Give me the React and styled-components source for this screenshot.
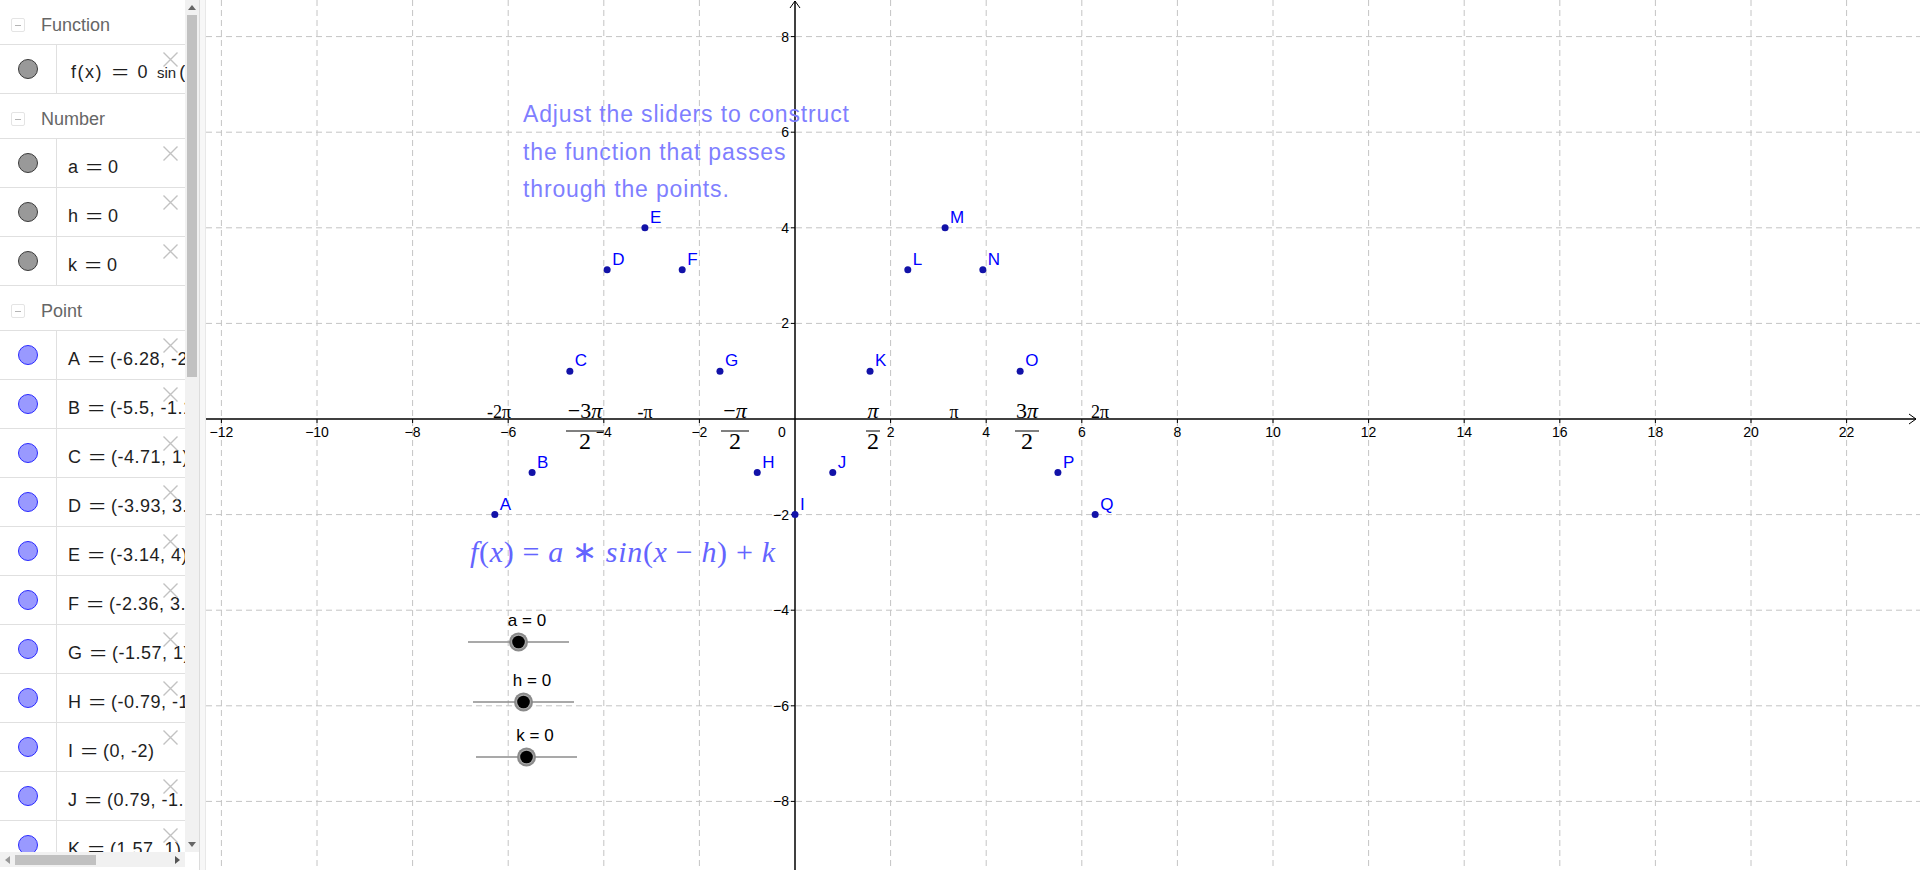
import React from 'react';
import styled, { createGlobalStyle } from 'styled-components';

const GlobalStyle = createGlobalStyle`
  html, body { margin: 0; padding: 0; background: #fff; overflow: hidden; }
  body { font-family: "Liberation Sans", Arial, sans-serif; }
  #root { width: 1920px; height: 870px; }
`;

const Page = styled.div`
  display: flex;
  width: 1920px;
  height: 870px;
  overflow: hidden;
  background: #fff;
`;

const AlgebraPanel = styled.div`
  width: 199px;
  height: 870px;
  flex-shrink: 0;
  display: flex;
  flex-direction: column;
`;

const PanelBody = styled.div`
  display: flex;
  height: 852px;
`;

const List = styled.div`
  width: 185px;
  height: 852px;
  overflow: hidden;
  flex-shrink: 0;
`;

const VScroll = styled.div`
  width: 14px;
  height: 852px;
  background: #f1f1f1;
  display: flex;
  flex-direction: column;
  align-items: center;
`;

const HScroll = styled.div`
  width: 185px;
  height: 15px;
  background: #f1f1f1;
  display: flex;
  align-items: center;
`;

const ArrowBtn = styled.div`
  width: ${p => (p.$horizontal ? '15px' : '14px')};
  height: 15px;
  flex-shrink: 0;
  display: flex;
  align-items: center;
  justify-content: center;
  &::before {
    content: '';
    width: 0;
    height: 0;
    ${p => p.$dir === 'up' && 'border-left: 4px solid transparent; border-right: 4px solid transparent; border-bottom: 5px solid #666;'}
    ${p => p.$dir === 'down' && 'border-left: 4px solid transparent; border-right: 4px solid transparent; border-top: 5px solid #666;'}
    ${p => p.$dir === 'left' && 'border-top: 4px solid transparent; border-bottom: 4px solid transparent; border-right: 5px solid #999;'}
    ${p => p.$dir === 'right' && 'border-top: 4px solid transparent; border-bottom: 4px solid transparent; border-left: 5px solid #555;'}
  }
`;

const VThumb = styled.div`
  width: 10px;
  height: 362px;
  background: #c1c1c1;
  flex-shrink: 0;
`;

const HThumb = styled.div`
  width: 81px;
  height: 10px;
  background: #c1c1c1;
  flex-shrink: 0;
`;

const Spacer = styled.div`
  flex: 1;
`;

const Divider = styled.div`
  width: 7px;
  height: 870px;
  flex-shrink: 0;
  box-sizing: border-box;
  background: #f7f7f7;
  border-left: 1px solid #dcdcdc;
  border-right: 1px solid #e8e8e8;
`;

const Graphics = styled.div`
  flex: 1;
  height: 870px;
  position: relative;
  overflow: hidden;
`;

const GroupHeader = styled.div`
  height: 45px;
  box-sizing: border-box;
  border-bottom: 1px solid #e0e0e0;
  padding: 6px 0 0 11px;
  display: flex;
  align-items: center;
  gap: 16px;
`;

const Collapse = styled.span`
  width: 14px;
  height: 14px;
  box-sizing: border-box;
  border: 1px solid #e4e4e4;
  border-radius: 2px;
  display: flex;
  align-items: center;
  justify-content: center;
  &::before {
    content: '';
    width: 6px;
    height: 1px;
    background: #b4b4b4;
  }
`;

const HeaderLabel = styled.span`
  font-size: 18px;
  color: #666;
  white-space: nowrap;
`;

const Item = styled.div`
  position: relative;
  height: 49px;
  box-sizing: border-box;
  border-bottom: 1px solid #e0e0e0;
  display: flex;
`;

const MarbleCell = styled.div`
  width: 57px;
  flex-shrink: 0;
  box-sizing: border-box;
  border-right: 1px solid #e0e0e0;
  display: flex;
  align-items: center;
  justify-content: center;
`;

const Marble = styled.span`
  width: 20px;
  height: 20px;
  box-sizing: border-box;
  border-radius: 50%;
  background: ${p => (p.$kind === 'point' ? '#9999ff' : '#999999')};
  border: 1.3px solid ${p => (p.$kind === 'point' ? '#2a2aff' : '#3a3a3a')};
`;

const ItemText = styled.div`
  align-self: center;
  padding: 7px 0 0 ${p => (p.$indent ? '14px' : '11px')};
  line-height: 22px;
  font-size: 18px;
  letter-spacing: 0.5px;
  color: #1e1e1e;
  white-space: nowrap;
`;

const Spaced = styled.span`
  letter-spacing: 1.5px;
`;

const Eq = styled.span`
  display: inline-block;
  font-size: 18px;
  letter-spacing: 0;
  transform: scaleX(1.6);
  margin: ${p => (p.$wide ? '0 12px 0 12px' : '0 9px 0 10px')};
`;

const Op = styled.span`
  font-size: 15px;
  letter-spacing: 0;
  margin: 0 3px 0 9px;
`;

const CloseBtn = styled.svg`
  position: absolute;
  left: 163px;
  top: 7px;
  width: 15px;
  height: 15px;
`;

const Canvas = styled.svg`
  display: block;
  width: 1714px;
  height: 870px;
`;

const Close = () => (
  <CloseBtn viewBox="0 0 15 15">
    <path d="M0.5 0.5 L14.5 14.5 M14.5 0.5 L0.5 14.5" stroke="#c2c2c2" strokeWidth="1.4" fill="none" />
  </CloseBtn>
);

const Expr = ({ lhs, rhs }) => (
  <ItemText>
    {lhs}
    <Eq>=</Eq>
    {rhs}
  </ItemText>
);

const points = [
  ['A', -6.28, -2, '(-6.28, -2)'],
  ['B', -5.5, -1.12, '(-5.5, -1.12)'],
  ['C', -4.71, 1, '(-4.71, 1)'],
  ['D', -3.93, 3.12, '(-3.93, 3.12)'],
  ['E', -3.14, 4, '(-3.14, 4)'],
  ['F', -2.36, 3.12, '(-2.36, 3.12)'],
  ['G', -1.57, 1, '(-1.57, 1)'],
  ['H', -0.79, -1.12, '(-0.79, -1.12)'],
  ['I', 0, -2, '(0, -2)'],
  ['J', 0.79, -1.12, '(0.79, -1.12)'],
  ['K', 1.57, 1, '(1.57, 1)'],
  ['L', 2.36, 3.12, '(2.36, 3.12)'],
  ['M', 3.14, 4, '(3.14, 4)'],
  ['N', 3.93, 3.12, '(3.93, 3.12)'],
  ['O', 4.71, 1, '(4.71, 1)'],
  ['P', 5.5, -1.12, '(5.5, -1.12)'],
  ['Q', 6.28, -2, '(6.28, -2)'],
];

const OX = 795;
const OY = 419;
const S = 47.8;
const px = x => OX + x * S;
const py = y => OY - y * S;

const range = (a, b, step) => {
  const r = [];
  for (let v = a; v <= b; v += step) r.push(v);
  return r;
};

const gridX = range(-12, 22, 2).filter(v => v !== 0);
const gridY = range(-8, 8, 2).filter(v => v !== 0);

const piPlain = [
  ['-2\u03c0', 499],
  ['-\u03c0', 645],
  ['\u03c0', 954],
  ['2\u03c0', 1100],
];

const piFrac = [
  ['\u22123', 585, 566, 604],
  ['\u2212', 735, 721, 749],
  ['', 873, 866, 880],
  ['3', 1027, 1015, 1039],
];

const sliders = [
  ['a', 468, 569, 642, 518.5, 527, 626],
  ['h', 473, 574, 702, 523.5, 532, 685.5],
  ['k', 476, 577, 757, 526.5, 535, 740.5],
];

const Graph = () => (
  <Canvas viewBox="206 0 1714 870">
    <g stroke="#c4c4c4" strokeWidth="1" strokeDasharray="6 4">
      {gridX.map(v => (
        <line key={'gx' + v} x1={px(v)} y1={0} x2={px(v)} y2={870} />
      ))}
      {gridY.map(v => (
        <line key={'gy' + v} x1={206} y1={py(v)} x2={1920} y2={py(v)} />
      ))}
    </g>
    <g stroke="#000" strokeWidth="1.5" fill="none">
      <line x1={206} y1={OY} x2={1916} y2={OY} />
      <polyline points={`1909,${OY - 5} 1916,${OY} 1909,${OY + 5}`} strokeWidth="1" />
      <line x1={OX} y1={1} x2={OX} y2={870} />
      <polyline points={`${OX - 5},8 ${OX},1 ${OX + 5},8`} strokeWidth="1" />
      {gridX.map(v => (
        <line key={'tx' + v} x1={px(v)} y1={OY} x2={px(v)} y2={OY + 4} strokeWidth="1" />
      ))}
      {gridY.map(v => (
        <line key={'ty' + v} x1={OX - 4} y1={py(v)} x2={OX} y2={py(v)} strokeWidth="1" />
      ))}
    </g>
    <g fontFamily='"Liberation Sans", Arial, sans-serif' fontSize="14" fill="#000">
      {gridX.map(v => (
        <text key={'lx' + v} x={px(v)} y={OY + 18} textAnchor="middle">
          {v < 0 ? '\u2212' + Math.abs(v) : String(v)}
        </text>
      ))}
      {gridY.map(v => (
        <text key={'ly' + v} x={OX - 6} y={py(v) + 5} textAnchor="end">
          {v < 0 ? '\u2212' + Math.abs(v) : String(v)}
        </text>
      ))}
      <text x={782} y={OY + 18} textAnchor="middle">0</text>
    </g>
    <g fontFamily='"Liberation Serif", "Times New Roman", serif' fill="#000">
      {piPlain.map(([t, x]) => (
        <text key={t} x={x} y={OY - 1} textAnchor="middle" fontSize="18">{t}</text>
      ))}
      {piFrac.map(([t, cx, x1, x2]) => (
        <g key={'f' + cx}>
          <text x={cx} y={OY - 1} textAnchor="middle" fontSize="22">
            {t}
            <tspan fontStyle="italic">{'\u03c0'}</tspan>
          </text>
          <line x1={x1} y1={431} x2={x2} y2={431} stroke="#000" strokeWidth="1" />
          <text x={cx} y={449} textAnchor="middle" fontSize="24">2</text>
        </g>
      ))}
    </g>
    <g>
      {points.map(([n, x, y]) => (
        <g key={n}>
          <circle cx={px(x)} cy={py(y)} r="3.5" fill="#1212a8" />
          <text
            x={px(x) + 5}
            y={py(y) - 5}
            fontFamily='"Liberation Sans", Arial, sans-serif'
            fontSize="17"
            fill="#0000ff"
          >
            {n}
          </text>
        </g>
      ))}
    </g>
    <g fontFamily='"Liberation Sans", Arial, sans-serif' fontSize="23" fill="#7f7fff" letterSpacing="0.85">
      <text x={523} y={122}>Adjust the sliders to construct</text>
      <text x={523} y={159.5}>the function that passes</text>
      <text x={523} y={197}>through the points.</text>
    </g>
    <text
      x={470}
      y={562}
      fontFamily='"Liberation Serif", "Times New Roman", serif'
      fontSize="30"
      fill="#6464ff"
      textLength="305"
      lengthAdjust="spacing"
    >
      <tspan fontStyle="italic">f</tspan>(<tspan fontStyle="italic">x</tspan>){' = '}
      <tspan fontStyle="italic">a</tspan>{' \u2217 '}
      <tspan fontStyle="italic">sin</tspan>(<tspan fontStyle="italic">x</tspan>{' \u2212 '}
      <tspan fontStyle="italic">h</tspan>){' + '}
      <tspan fontStyle="italic">k</tspan>
    </text>
    {sliders.map(([n, x1, x2, y, kx, lx, ly]) => (
      <g key={n}>
        <line x1={x1} y1={y} x2={x2} y2={y} stroke="#8c8c8c" strokeWidth="1.5" />
        <circle cx={kx} cy={y} r="9.5" fill="#8a8a8a" />
        <circle cx={kx} cy={y} r="7.5" fill="#a8a8a8" />
        <circle cx={kx} cy={y} r="6.3" fill="#000" />
        <text
          x={lx}
          y={ly}
          textAnchor="middle"
          fontFamily='"Liberation Sans", Arial, sans-serif'
          fontSize="17"
          fill="#000"
        >
          {`${n} = 0`}
        </text>
      </g>
    ))}
  </Canvas>
);

export default function App() {
  return (
    <>
      <GlobalStyle />
      <Page>
        <AlgebraPanel>
          <PanelBody>
            <List>
              <GroupHeader>
                <Collapse />
                <HeaderLabel>Function</HeaderLabel>
              </GroupHeader>
              <Item>
                <MarbleCell><Marble $kind="num" /></MarbleCell>
                <ItemText $indent>
                  <Spaced>f(x)</Spaced>
                  <Eq $wide>=</Eq>
                  0
                  <Op>sin</Op>
                  (x - 0) + 0
                </ItemText>
                <Close />
              </Item>
              <GroupHeader>
                <Collapse />
                <HeaderLabel>Number</HeaderLabel>
              </GroupHeader>
              {['a', 'h', 'k'].map(n => (
                <Item key={n}>
                  <MarbleCell><Marble $kind="num" /></MarbleCell>
                  <Expr lhs={n} rhs="0" />
                  <Close />
                </Item>
              ))}
              <GroupHeader>
                <Collapse />
                <HeaderLabel>Point</HeaderLabel>
              </GroupHeader>
              {points.map(([n, , , t]) => (
                <Item key={n}>
                  <MarbleCell><Marble $kind="point" /></MarbleCell>
                  <Expr lhs={n} rhs={t} />
                  <Close />
                </Item>
              ))}
            </List>
            <VScroll>
              <ArrowBtn $dir="up" />
              <VThumb />
              <Spacer />
              <ArrowBtn $dir="down" />
            </VScroll>
          </PanelBody>
          <HScroll>
            <ArrowBtn $dir="left" $horizontal />
            <HThumb />
            <Spacer />
            <ArrowBtn $dir="right" $horizontal />
          </HScroll>
        </AlgebraPanel>
        <Divider />
        <Graphics>
          <Graph />
        </Graphics>
      </Page>
    </>
  );
}
